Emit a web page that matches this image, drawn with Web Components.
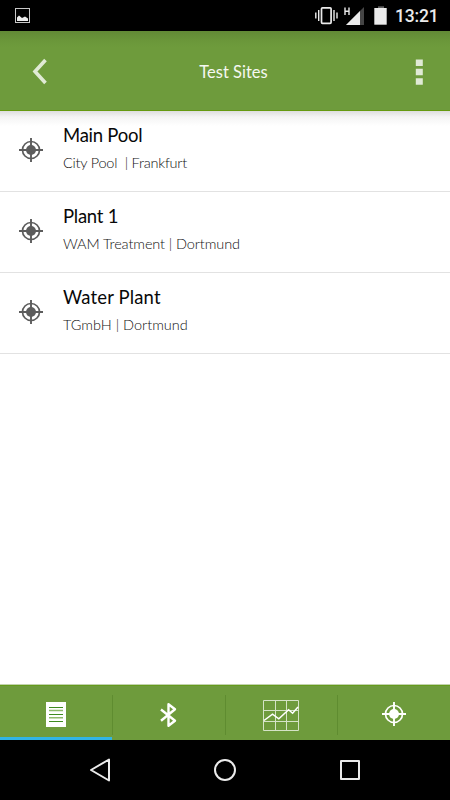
<!DOCTYPE html>
<html lang="en">
<head>
<meta charset="utf-8">
<title>Test Sites</title>
<style>
  body {
    margin: 0;
    background: #ffffff;
    font-family: Lato, "Open Sans", sans-serif;
  }
</style>
</head>
<body>
<app-screen>
  <status-bar slot="top" time="13:21"></status-bar>
  <title-bar slot="top">Test Sites</title-bar>
  <site-item style="--name-spacing: -0.25px; --place-spacing: -0.22px">
    Main Pool<span slot="place">City Pool&nbsp; | Frankfurt</span>
  </site-item>
  <site-item style="--name-spacing: -0.25px; --place-spacing: -0.1px">
    Plant 1<span slot="place">WAM Treatment | Dortmund</span>
  </site-item>
  <site-item style="--name-spacing: 0.15px; --place-spacing: 0px">
    Water Plant<span slot="place">TGmbH | Dortmund</span>
  </site-item>
  <tab-bar slot="bottom"></tab-bar>
  <nav-bar slot="bottom"></nav-bar>
</app-screen>

<script>
class AppScreen extends HTMLElement {
  constructor() {
    super();
    this.attachShadow({ mode: 'open' });
  }

  connectedCallback() {
    this.shadowRoot.innerHTML = `
      <style>
        :host {
          display: flex;
          flex-direction: column;
          width: 450px;
          height: 800px;
          overflow: hidden;
        }
        main {
          flex: 1;
          background: linear-gradient(#dedede, #f4f4f4 6px, #ffffff 15px);
        }
      </style>
      <slot name="top"></slot>
      <main><slot></slot></main>
      <slot name="bottom"></slot>
    `;
  }
}

class StatusBar extends HTMLElement {
  constructor() {
    super();
    this.attachShadow({ mode: 'open' });
  }

  connectedCallback() {
    this.shadowRoot.innerHTML = `
      <style>
        :host {
          display: flex;
          align-items: center;
          flex: none;
          box-sizing: border-box;
          height: 31px;
          padding: 0 11px 0 14px;
          background: #000000;
          color: #ebebeb;
          font: 500 17.5px/31px Roboto, sans-serif;
        }
        svg { display: block; }
        .photo { margin-right: auto; }
        .time {
          margin: 2px 0 0 7px;
          width: 44px;
          white-space: nowrap;
          letter-spacing: -0.2px;
        }
      </style>
      <svg class="photo" width="17" height="31" viewBox="14 0 17 31">
        <rect x="15.5" y="8.5" width="14" height="14" fill="none" stroke="#c8c8c8"/>
        <path d="M17 21v-3.5l2-2 3 2.5 3-1.5 3 2V21z" fill="#ebebeb"/>
      </svg>
      <svg width="74" height="31" viewBox="314 0 74 31">
        <g fill="none" stroke="#ebebeb" stroke-width="1.4">
          <rect x="321.5" y="7.8" width="9.6" height="15.5" rx="1" stroke-width="1.7"/>
          <path d="M318.7 10v11M315.8 12.5v6M334 10v11M337 12.5v6"/>
          <path d="M345 7.5v7.5M349 7.5v7.5M345 11.2h4"/>
        </g>
        <path d="M364 7v18h-18z" fill="#454545"/>
        <path d="M360 11v14h-14z" fill="#ebebeb"/>
        <path d="M378 6.3h6V8h-6z" fill="#606060"/>
        <path d="M374.3 8h12.4v16.7h-12.4z" fill="#ebebeb"/>
      </svg>
      <span class="time">${this.getAttribute('time')}</span>
    `;
  }
}

class TitleBar extends HTMLElement {
  constructor() {
    super();
    this.attachShadow({ mode: 'open' });
  }

  connectedCallback() {
    this.shadowRoot.innerHTML = `
      <style>
        :host {
          display: grid;
          grid-template-columns: 79px 1fr 62px;
          align-items: center;
          justify-items: center;
          flex: none;
          box-sizing: border-box;
          height: 80px;
          border-bottom: 1px solid #659a10;
          background: linear-gradient(#628a36, #6b973a 10px, #6e9b3c 16px);
          color: #f5f8f1;
          font-size: 16.5px;
        }
        svg { display: block; }
        .title { margin-top: 2px; white-space: nowrap; }
      </style>
      <svg width="20" height="32" viewBox="0 0 20 32">
        <path d="M15.5 5 5 16.5 15.5 28" fill="none" stroke="#e0ead5" stroke-width="3.6"/>
      </svg>
      <span class="title"><slot></slot></span>
      <svg width="10" height="28" viewBox="0 0 10 28">
        <path d="M1.8 2.4h7v6.6h-7zM1.8 11.8h7v6.4h-7zM1.8 21.2h7v6.6h-7z" fill="#e0ead5"/>
      </svg>
    `;
  }
}

class TargetIcon extends HTMLElement {
  constructor() {
    super();
    this.attachShadow({ mode: 'open' });
  }

  connectedCallback() {
    this.shadowRoot.innerHTML = `
      <style>
        :host { display: block; width: 24px; height: 24px; }
        svg { display: block; }
      </style>
      <svg width="24" height="24" viewBox="0 0 24 24" fill="none" stroke="currentColor">
        <circle cx="12" cy="12" r="8.5" stroke-width="1.7"/>
        <circle cx="12" cy="12" r="5" fill="currentColor" stroke="none"/>
        <path d="M12 0v24M0 12h24" stroke-width="1.9"/>
      </svg>
    `;
  }
}

class SiteItem extends HTMLElement {
  constructor() {
    super();
    this.attachShadow({ mode: 'open' });
  }

  connectedCallback() {
    this.shadowRoot.innerHTML = `
      <style>
        :host {
          display: grid;
          grid-template-columns: 44px 1fr;
          box-sizing: border-box;
          height: 81px;
          padding: 12px 0 0 19px;
          border-bottom: 1px solid #e2e2e2;
        }
        target-icon { margin-top: 15px; color: #5c5c5c; }
        .name {
          color: #080808;
          font-size: 18.5px;
          line-height: 24px;
          letter-spacing: var(--name-spacing);
        }
        .place {
          margin-top: 6px;
          color: #111111;
          font-size: 14.5px;
          font-weight: 300;
          line-height: 20px;
          letter-spacing: var(--place-spacing);
        }
      </style>
      <target-icon></target-icon>
      <div>
        <div class="name"><slot></slot></div>
        <div class="place"><slot name="place"></slot></div>
      </div>
    `;
  }
}

class TabBar extends HTMLElement {
  constructor() {
    super();
    this.attachShadow({ mode: 'open' });
  }

  connectedCallback() {
    this.shadowRoot.innerHTML = `
      <style>
        :host {
          display: grid;
          grid-template-columns: 112px 113px 112px 113px;
          flex: none;
          box-sizing: border-box;
          height: 56px;
          border-top: 1px solid #c2d3ad;
          background: linear-gradient(#659a1c 1px, #6e9b3c 1px);
          color: #ffffff;
        }
        .tab {
          display: grid;
          place-items: center;
          box-sizing: border-box;
          padding-top: 4px;
        }
        .tab + .tab {
          background: linear-gradient(#5f8c30, #5f8c30) left 10px / 1px 40px no-repeat;
        }
        .activa { box-shadow: inset 0 -3px #31b5e5; }
        .chart { padding-top: 6px; }
        .target { padding-top: 2px; }
        svg { display: block; }
      </style>
      <div class="tab activa">
        <svg width="20" height="25" viewBox="0 0 20 25">
          <path d="M0 0h20v25H0z" fill="#ffffff"/>
          <path d="M3 5.5h14M3 12.5h14M3 19.5h14" stroke="#3f8b20"/>
          <path d="M3 8.5h14M3 15.7h14" stroke="#8fb96c" stroke-width="1.4"/>
        </svg>
      </div>
      <div class="tab">
        <svg width="18" height="26" viewBox="0 0 18 26">
          <path d="m1 7.5 14 11.2-6.5 5V2.3l6.5 5L1 18.7" fill="none" stroke="#ffffff" stroke-width="2.4" stroke-linejoin="round"/>
        </svg>
      </div>
      <div class="tab chart">
        <svg width="36" height="31" viewBox="0 0 36 31" fill="none">
          <path d="M.5.5h35v30H.5zM12.5.5v30M23.5.5v30M.5 10.5h35M.5 21.5h35" stroke="#d5e3c6"/>
          <path d="m1 20.5 8.5-6.3 6.3 4.6 9.8-9 4 3.5L35 7" stroke="#ffffff" stroke-width="1.5"/>
        </svg>
      </div>
      <div class="tab target"><target-icon></target-icon></div>
    `;
  }
}

class NavBar extends HTMLElement {
  constructor() {
    super();
    this.attachShadow({ mode: 'open' });
  }

  connectedCallback() {
    this.shadowRoot.innerHTML = `
      <style>
        :host {
          display: grid;
          grid-template-columns: repeat(3, 125px);
          justify-content: center;
          place-items: center;
          flex: none;
          height: 60px;
          background: #000000;
        }
        svg {
          display: block;
          fill: none;
          stroke: #ebebeb;
          stroke-width: 2;
          stroke-linejoin: round;
        }
      </style>
      <svg width="26" height="26" viewBox="0 0 26 26"><path d="M22 2.5v21L4 13z"/></svg>
      <svg width="26" height="26" viewBox="0 0 26 26"><circle cx="13" cy="13" r="10"/></svg>
      <svg width="26" height="26" viewBox="0 0 26 26"><path d="M4 4h18v18H4z"/></svg>
    `;
  }
}

customElements.define('target-icon', TargetIcon);
customElements.define('status-bar', StatusBar);
customElements.define('title-bar', TitleBar);
customElements.define('site-item', SiteItem);
customElements.define('tab-bar', TabBar);
customElements.define('nav-bar', NavBar);
customElements.define('app-screen', AppScreen);
</script>
</body>
</html>
